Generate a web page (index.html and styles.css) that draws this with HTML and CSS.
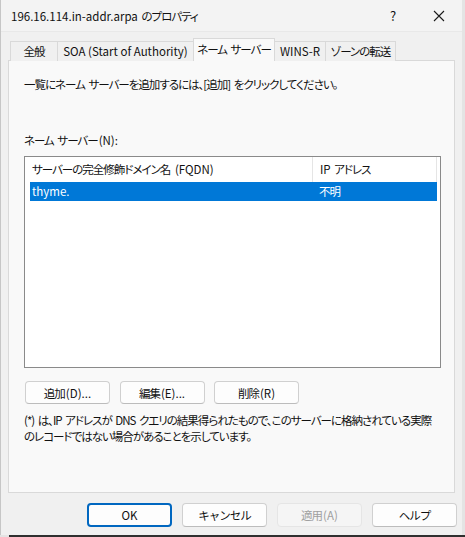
FILE: index.html
```html
<!DOCTYPE html>
<html lang="ja">
<head>
<meta charset="utf-8">
<title>196.16.114.in-addr.arpa のプロパティ</title>
<link rel="stylesheet" href="styles.css">
</head>
<body>
<div class="window">
  <div class="titlebar">
    <span class="title"><span class="en">196.16.114.in-addr.arpa</span> のプロパティ</span>
    <span class="help">?</span>
    <span class="close">
      <svg width="12" height="12" viewBox="0 0 12 12"><path d="M1 1 L11 11 M11 1 L1 11" stroke="#1a1a1a" stroke-width="1.1" fill="none"/></svg>
    </span>
  </div>
  <div class="tabs">
    <div class="tab t1">全般</div>
    <div class="tab t2 latin">SOA (Start of Authority)</div>
    <div class="tab t3 active">ネーム サーバー</div>
    <div class="tab t4 latin">WINS-R</div>
    <div class="tab t5">ゾーンの転送</div>
  </div>
  <div class="panel">
    <p class="intro">一覧にネーム サーバーを追加するには、[追加] をクリックしてください。</p>
    <p class="label">ネーム サーバー<span class="en">(N):</span></p>
    <div class="listbox">
      <div class="lv-header">
        <div class="col col-name">サーバーの完全修飾ドメイン名 <span class="en">(FQDN)</span></div>
        <div class="col col-ip"><span class="en">IP</span> アドレス</div>
      </div>
      <div class="lv-row selected">
        <div class="col col-name latin">thyme.</div>
        <div class="col col-ip">不明</div>
      </div>
    </div>
    <div class="actions">
      <button class="btn">追加<span class="en">(D)...</span></button>
      <button class="btn">編集<span class="en">(E)...</span></button>
      <button class="btn">削除<span class="en">(R)</span></button>
    </div>
    <p class="note">(*) は、IP アドレスが DNS クエリの結果得られたもので、このサーバーに格納されている実際<br>のレコードではない場合があることを示しています。</p>
  </div>
  <div class="footer">
    <button class="btn default latin">OK</button>
    <button class="btn">キャンセル</button>
    <button class="btn disabled">適用<span class="en">(A)</span></button>
    <button class="btn">ヘルプ</button>
  </div>
</div>
<div class="desk-bottom"></div>
</body>
</html>
```
FILE: styles.css
```css
html, body {
  margin: 0;
  padding: 0;
}
body {
  background: #e4e4e4;
  font-family: "Noto Sans CJK JP", "Noto Sans", sans-serif;
  font-size: 11.5px;
  color: #111111;
  font-feature-settings: "palt";
  letter-spacing: -1px;
  word-spacing: 2px;
}
.en {
  letter-spacing: 0;
  padding-left: 1px;
}
.latin {
  letter-spacing: 0;
  word-spacing: 0;
}
.window {
  width: 462px;
  height: 535px;
  background: #f0f0f0;
  box-sizing: border-box;
  border-left: 1px solid #c6c6c6;
}
.titlebar {
  height: 32px;
  display: flex;
  align-items: center;
  background: #f3f3f3;
  border-bottom: 1px solid #e8e8e8;
  box-sizing: border-box;
}
.title {
  margin-left: 9px;
  flex: 1;
  line-height: 16px;
}
.help {
  width: 46px;
  text-align: center;
  font-size: 13px;
  letter-spacing: 0;
  margin-left: 6px;
}
.close {
  width: 46px;
  height: 32px;
  display: flex;
  align-items: center;
  justify-content: center;
}
.tabs {
  display: flex;
  align-items: flex-end;
  height: 22px;
  margin: 7px 0 -1px 9px;
  position: relative;
  z-index: 1;
}
.tab {
  height: 20px;
  line-height: 19px;
  box-sizing: border-box;
  border: 1px solid #d9d9d9;
  border-bottom: none;
  margin-right: -1px;
  padding: 0;
  text-align: center;
  background: #f0f0f0;
  white-space: nowrap;
}
.t1 { width: 48px; }
.t2 { width: 137px; }
.t3 { width: 82px; }
.t4 { width: 52px; }
.t5 { width: 71px; }
.tab.active {
  height: 23px;
  line-height: 21px;
  background: #f9f9f9;
  position: relative;
  z-index: 2;
}
.panel {
  margin-left: 7px;
  width: 447px;
  height: 433px;
  box-sizing: border-box;
  background: #f9f9f9;
  border: 1px solid #d9d9d9;
  padding: 15px 13px 0 15px;
}
.intro {
  margin: 0;
  line-height: 16px;
}
.label {
  margin: 40px 0 0;
  line-height: 16px;
}
.listbox {
  margin-top: 8px;
  height: 212px;
  box-sizing: border-box;
  border: 1px solid #8a8a8a;
  background: #fff;
  padding: 0 3px 0 5px;
}
.lv-header, .lv-row {
  display: flex;
}
.lv-header {
  height: 25px;
  line-height: 24px;
}
.lv-header .col {
  border-right: 1px solid #e5e5e5;
}
.lv-row {
  height: 19px;
  line-height: 19px;
}
.lv-row.selected {
  background: #0078d7;
  color: #fff;
}
.col {
  box-sizing: border-box;
  padding-left: 2px;
  white-space: nowrap;
}
.col-name {
  width: 283px;
}
.col-ip {
  width: 124px;
  padding-left: 6px;
}
.actions {
  display: flex;
  gap: 9.5px;
  margin-top: 13px;
  padding-left: 1px;
}
.btn {
  width: 85px;
  height: 23px;
  box-sizing: border-box;
  border: 1px solid #d0d0d0;
  border-bottom-color: #bcbcbc;
  border-radius: 4px;
  background: #fdfdfd;
  font-family: inherit;
  font-size: 11.5px;
  letter-spacing: -1px;
  color: #111111;
  padding: 0;
  line-height: 20px;
}
.btn.latin {
  letter-spacing: 0;
}
.note {
  margin: 9px 0 0;
  line-height: 15.5px;
  white-space: nowrap;
}
.footer {
  display: flex;
  justify-content: flex-end;
  gap: 10px;
  margin-top: 10px;
  padding-right: 5px;
}
.footer .btn {
  height: 24px;
}
.btn.default {
  border: 2px solid #0067c0;
  line-height: 19px;
}
.btn.disabled {
  background: #f5f5f5;
  border-color: #e5e5e5;
  color: #a0a0a0;
}
.desk-bottom {
  height: 2px;
  background: #2f2f2f;
  margin-left: 9px;
}
```
